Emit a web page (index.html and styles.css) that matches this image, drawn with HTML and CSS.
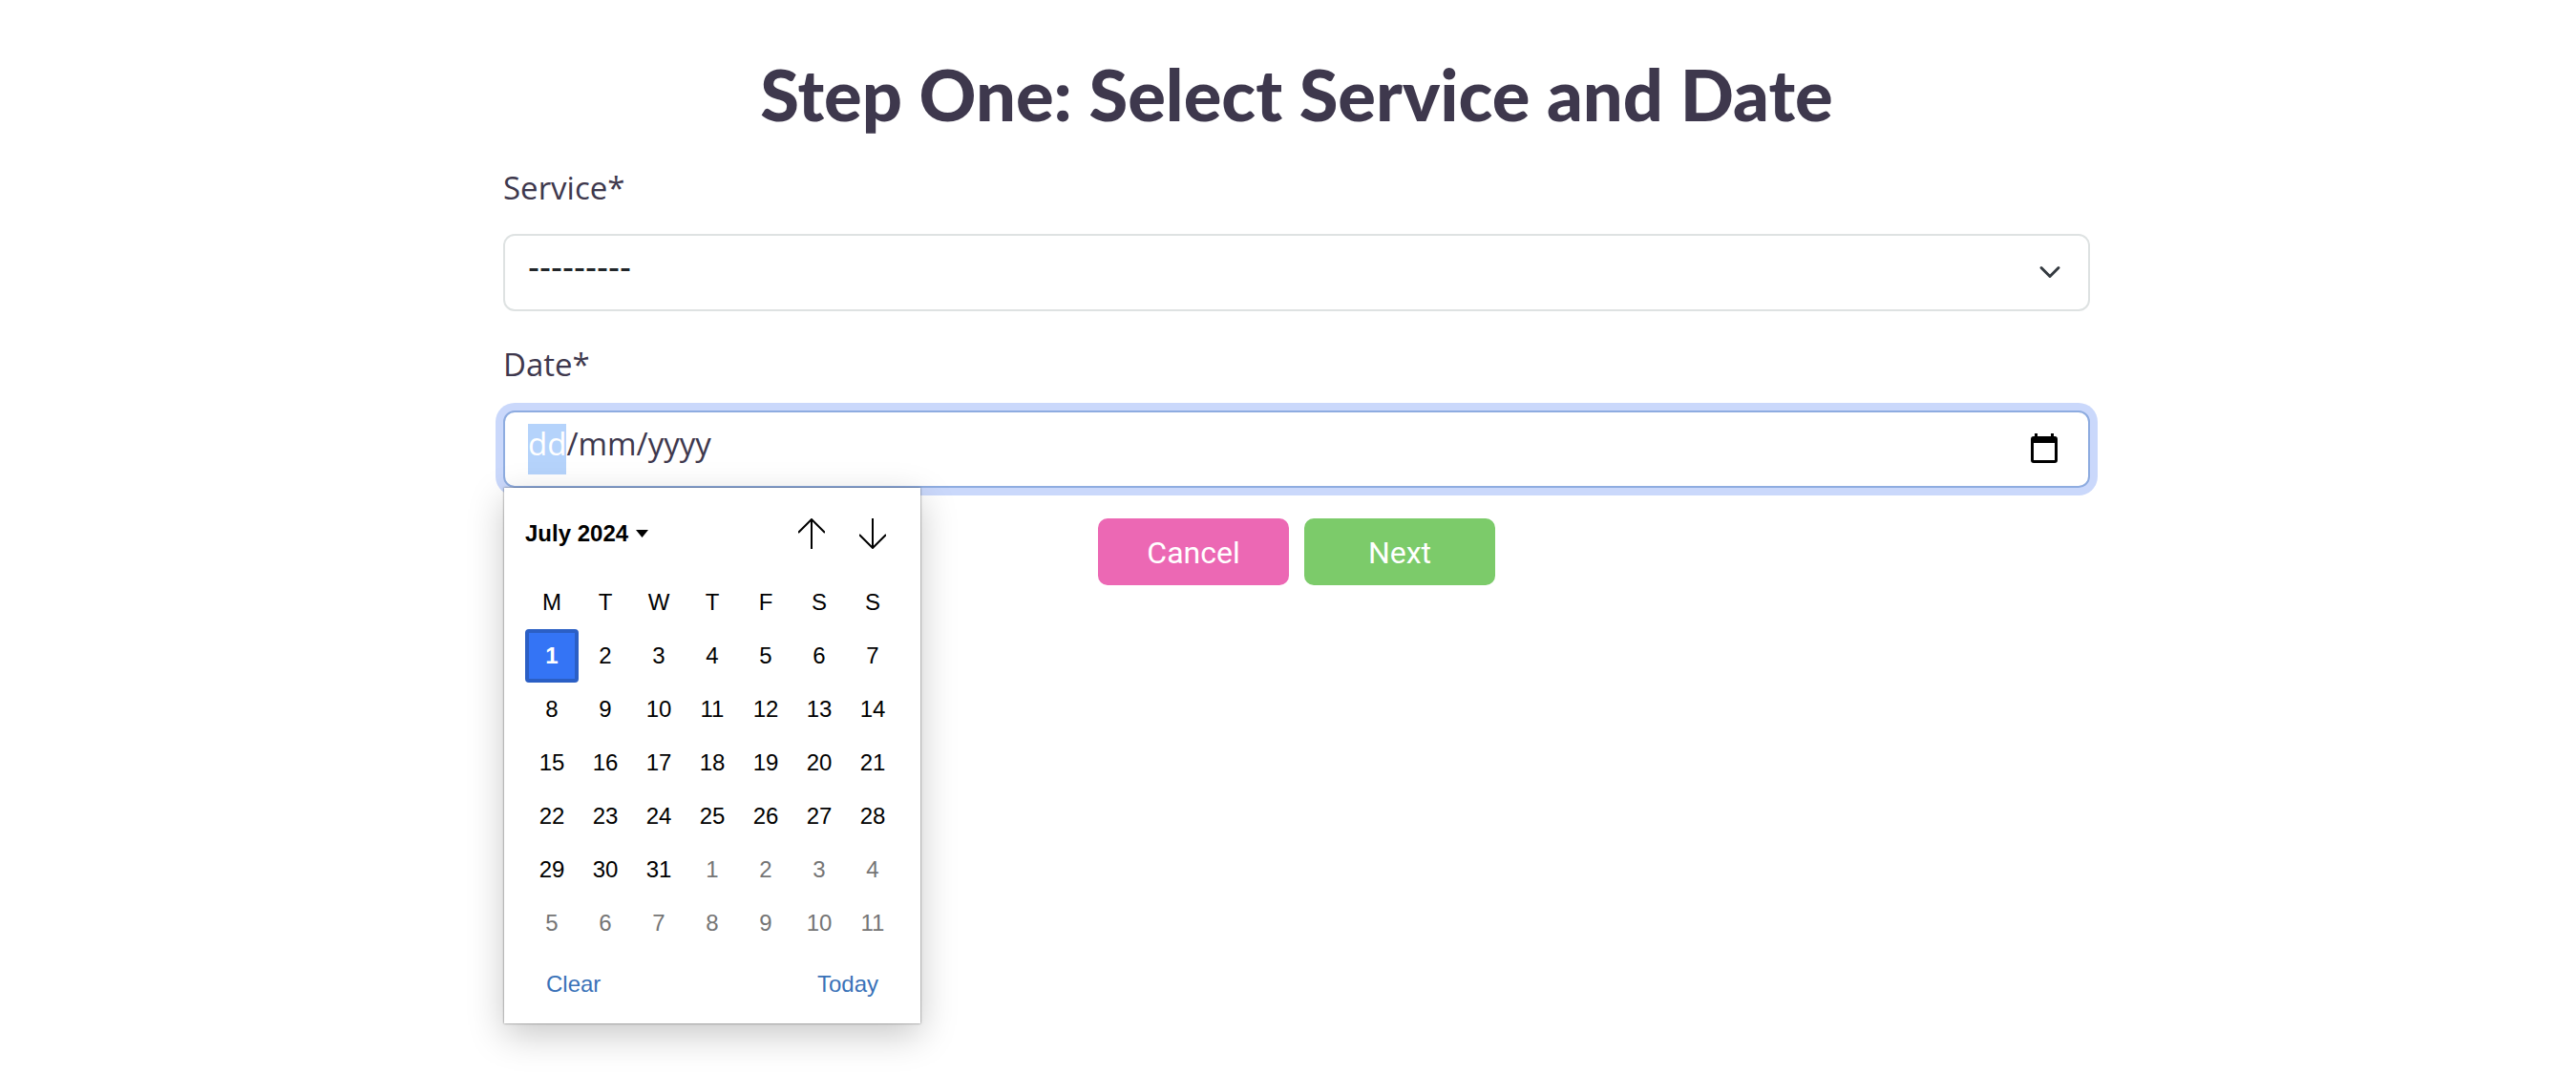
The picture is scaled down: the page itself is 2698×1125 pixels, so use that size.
FILE: index.html
```html
<!DOCTYPE html>
<html lang="en-GB">
<head>
<meta charset="utf-8">
<meta name="viewport" content="width=device-width, initial-scale=1">
<title>Select Service and Date</title>
<link rel="stylesheet" href="styles.css">
</head>
<body>
<main class="booking">
  <h1 class="title">Step One: Select Service and Date</h1>
  <form class="form">
    <div class="field">
      <label class="label" for="service">Service*</label>
      <div class="control-wrap">
        <select class="control select" id="service"><option>---------</option></select>
        <svg class="chevron" viewBox="0 0 16 16" aria-hidden="true"><path d="M2 5l6 6 6-6" fill="none" stroke="#343a40" stroke-width="2" stroke-linecap="round" stroke-linejoin="round"/></svg>
      </div>
    </div>
    <div class="field">
      <label class="label" for="date">Date*</label>
      <div class="control-wrap">
        <input class="control date" id="date" type="text" value="dd/mm/yyyy" autocomplete="off" autofocus>
        <button class="picker-toggle" type="button" aria-label="Show date picker">
          <svg viewBox="0 0 28 31" width="28" height="31" aria-hidden="true"><path fill-rule="evenodd" d="M4 0h3v3h14V0h3v3h1a3 3 0 0 1 3 3v22a3 3 0 0 1-3 3H3a3 3 0 0 1-3-3V6a3 3 0 0 1 3-3h1zM3 10v18h22V10z"/></svg>
        </button>
        <div class="picker">
          <div class="picker-head">
            <button class="month" type="button">July 2024 <svg viewBox="0 0 13 8" width="13" height="8" aria-hidden="true"><path d="M0 0h13L6.500 8z"/></svg></button>
            <div class="arrows">
              <button class="plain" type="button" aria-label="Previous month"><svg viewBox="0 0 28 32" width="28" height="32" aria-hidden="true"><path d="M14 32V1M0 15L14 1l14 14" fill="none" stroke="#000" stroke-width="2"/></svg></button>
              <button class="plain" type="button" aria-label="Next month"><svg viewBox="0 0 28 32" width="28" height="32" aria-hidden="true"><path d="M14 0v31M0 17l14 14 14-14" fill="none" stroke="#000" stroke-width="2"/></svg></button>
            </div>
          </div>
          <table class="days">
            <thead><tr><th>M</th><th>T</th><th>W</th><th>T</th><th>F</th><th>S</th><th>S</th></tr></thead>
            <tbody>
              <tr><td class="selected">1</td><td>2</td><td>3</td><td>4</td><td>5</td><td>6</td><td>7</td></tr>
              <tr><td>8</td><td>9</td><td>10</td><td>11</td><td>12</td><td>13</td><td>14</td></tr>
              <tr><td>15</td><td>16</td><td>17</td><td>18</td><td>19</td><td>20</td><td>21</td></tr>
              <tr><td>22</td><td>23</td><td>24</td><td>25</td><td>26</td><td>27</td><td>28</td></tr>
              <tr><td>29</td><td>30</td><td>31</td><td class="other">1</td><td class="other">2</td><td class="other">3</td><td class="other">4</td></tr>
              <tr><td class="other">5</td><td class="other">6</td><td class="other">7</td><td class="other">8</td><td class="other">9</td><td class="other">10</td><td class="other">11</td></tr>
            </tbody>
          </table>
          <div class="picker-foot">
            <button class="plain action" type="button">Clear</button>
            <button class="plain action" type="button">Today</button>
          </div>
        </div>
      </div>
    </div>
    <div class="buttons">
      <button class="btn cancel" type="button">Cancel</button>
      <button class="btn next" type="submit">Next</button>
    </div>
  </form>
</main>
<script src="script.js"></script>
</body>
</html>
```
FILE: styles.css
```css
* {
  box-sizing: border-box;
}

body {
  min-height: 100vh;
  margin: 0;
  padding: 57px 16px 32px 34px;
  background: #fff;
  color: #3e384d;
  font-family: "Open Sans", "Noto Sans", sans-serif;
  font-size: 33px;
}

/* The bottom padding leaves room for the open date picker. */
.booking {
  max-width: 1662px;
  margin: 0 auto;
  padding-bottom: 480px;
}

.title {
  margin: 0 0 32px;
  font-family: Lato, sans-serif;
  font-size: 74px;
  font-weight: 900;
  line-height: 84px;
  text-align: center;
}

.field {
  margin-bottom: 32px;
}

.label {
  display: block;
  margin-bottom: 24px;
  line-height: 48px;
}

.control-wrap {
  position: relative;
}

.control {
  display: block;
  width: 100%;
  height: 81px;
  border: 2px solid #dee2e2;
  border-radius: 12px;
  padding: 0 72px 12px 24px;
  background-color: #fff;
  color: #3e384d;
  font: inherit;
  outline: 0;
}

.select {
  appearance: none;
  color: #212529;
  font-family: "Liberation Sans", Arial, sans-serif;
  font-size: 36px;
}

.chevron {
  position: absolute;
  right: 30px;
  top: 28px;
  width: 24px;
  height: 24px;
  pointer-events: none;
}

.date {
  background-image: linear-gradient(#b5d3fb, #b5d3fb);
  background-repeat: no-repeat;
  background-size: 40px 53px;
  background-position: 24px 12px;
}

.date:focus {
  border-color: #8eace0;
  box-shadow: 0 0 0 8px #cad8fb;
}

.date::selection {
  background: transparent;
  color: #fff;
}

.picker-toggle {
  position: absolute;
  right: 34px;
  top: 24px;
  display: flex;
  border: 0;
  padding: 0;
  background: none;
}

.picker {
  position: absolute;
  top: 100%;
  left: 1px;
  width: 436px;
  padding: 22px;
  background: #fff;
  box-shadow: 0 0 2px rgba(0, 0, 0, 0.6), 0 12px 36px rgba(0, 0, 0, 0.22);
  color: #000;
  font-family: "Liberation Sans", Arial, sans-serif;
  font-size: 24px;
  line-height: 28px;
}

.picker-head {
  display: flex;
  justify-content: space-between;
  align-items: center;
  height: 52px;
  padding-right: 14px;
}

.month,
.plain {
  display: flex;
  align-items: center;
  gap: 8px;
  border: 0;
  padding: 0;
  background: none;
  color: #000;
  font: inherit;
}

.month {
  font-weight: 700;
}

.arrows {
  display: flex;
  gap: 36px;
}

.days {
  width: 100%;
  border-collapse: separate;
  border-spacing: 0;
  table-layout: fixed;
}

.days th,
.days td {
  height: 56px;
  padding: 0;
  text-align: center;
  font-weight: 400;
}

.days th {
  height: 74px;
  padding-top: 18px;
}

.days .selected {
  border: 4px solid #2b5fc5;
  border-radius: 4px;
  background: #3474f5;
  color: #fff;
  font-weight: 700;
}

.days .other {
  color: #757575;
}

.picker-foot {
  display: flex;
  justify-content: space-between;
  padding: 22px 22px 5px;
}

.action {
  color: #3a72b8;
}

.buttons {
  display: flex;
  justify-content: center;
  gap: 16px;
}

.btn {
  width: 200px;
  height: 70px;
  border: 0;
  border-radius: 10px;
  padding: 2px 0 0;
  color: #fff;
  font-family: Roboto, sans-serif;
  font-size: 32px;
}

.cancel {
  background: #ec68b4;
}

.next {
  background: #7ccb6a;
}
```
FILE: script.js
```js
// Start with the day part of the date selected.
const date = document.getElementById('date');
date.focus();
date.setSelectionRange(0, 2);
```
